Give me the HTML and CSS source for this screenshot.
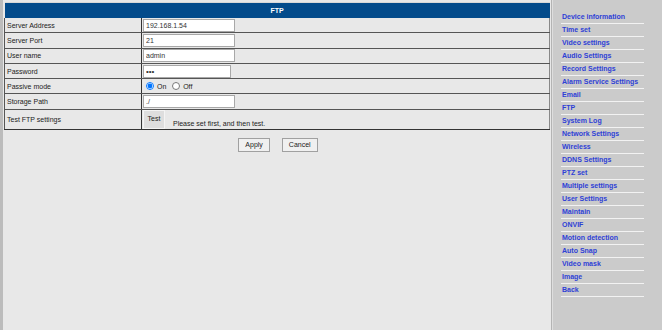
FILE: index.html
```html
<!DOCTYPE html>
<html lang="en">
<head>
    <meta charset="UTF-8">
    <title>FTP</title>
    <link rel="stylesheet" href="styles.css">
</head>
<body>
    <div class="page">
        <div class="main">
            <table class="form-table">
                <tr>
                    <th colspan="2" class="title">FTP</th>
                </tr>
                <tr>
                    <td class="label">Server Address</td>
                    <td><input type="text" class="txt" value="192.168.1.54"></td>
                </tr>
                <tr>
                    <td class="label">Server Port</td>
                    <td><input type="text" class="txt" value="21"></td>
                </tr>
                <tr>
                    <td class="label">User name</td>
                    <td><input type="text" class="txt" value="admin"></td>
                </tr>
                <tr>
                    <td class="label">Password</td>
                    <td><input type="password" class="txt pwd" value="abc"></td>
                </tr>
                <tr>
                    <td class="label">Passive mode</td>
                    <td class="radios">
                        <input type="radio" name="pasv" checked> On
                        <input type="radio" name="pasv"> Off
                    </td>
                </tr>
                <tr>
                    <td class="label">Storage Path</td>
                    <td><input type="text" class="txt" value="./"></td>
                </tr>
                <tr class="test-row">
                    <td class="label">Test FTP settings</td>
                    <td><span class="btn-test">Test</span><span class="hint">Please set first, and then test.</span></td>
                </tr>
            </table>
            <div class="actions">
                <span class="btn">Apply</span>
                <span class="btn">Cancel</span>
            </div>
        </div>
        <div class="side">
            <ul class="menu">
                <li><a href="#">Device information</a></li>
                <li><a href="#">Time set</a></li>
                <li><a href="#">Video settings</a></li>
                <li><a href="#">Audio Settings</a></li>
                <li><a href="#">Record Settings</a></li>
                <li><a href="#">Alarm Service Settings</a></li>
                <li><a href="#">Email</a></li>
                <li><a href="#">FTP</a></li>
                <li><a href="#">System Log</a></li>
                <li><a href="#">Network Settings</a></li>
                <li><a href="#">Wireless</a></li>
                <li><a href="#">DDNS Settings</a></li>
                <li><a href="#">PTZ set</a></li>
                <li><a href="#">Multiple settings</a></li>
                <li><a href="#">User Settings</a></li>
                <li><a href="#">Maintain</a></li>
                <li><a href="#">ONVIF</a></li>
                <li><a href="#">Motion detection</a></li>
                <li><a href="#">Auto Snap</a></li>
                <li><a href="#">Video mask</a></li>
                <li><a href="#">Image</a></li>
                <li><a href="#">Back</a></li>
            </ul>
        </div>
    </div>
</body>
</html>
```

FILE: styles.css
```css
html, body {
    margin: 0;
    padding: 0;
    height: 100%;
}
body {
    font-family: "Liberation Sans", Arial, sans-serif;
    font-size: 7px;
    color: #222;
    background: #e8e8e8;
}
.page {
    display: flex;
    height: 330px;
    border-left: 3px solid #bcbcbc;
}
.main {
    width: 548px;
    background: #e8e8e8;
    padding-top: 2px;
}
.form-table {
    width: 546px;
    margin-left: 1px;
    border-collapse: collapse;
    border-top: 1px solid #d8d8d8;
}
.form-table .title {
    background: #034b8b;
    color: #fff;
    font-weight: bold;
    font-size: 7px;
    height: 15px;
    padding: 0;
    text-align: center;
}
.form-table td {
    height: 14.3px;
    padding: 0;
    border-bottom: 1px solid #555;
    vertical-align: middle;
}
.form-table .label {
    width: 134px;
    padding-left: 2px;
    border-left: 1px solid #555;
    border-right: 1px solid #333;
}
.form-table td:last-child {
    border-right: 1px solid #888;
}
.txt {
    box-sizing: border-box;
    width: 92px;
    height: 13px;
    margin: 0 0 0 1px;
    padding: 0 2px;
    border: 1px solid #a8a8a8;
    background: #fff;
    font-family: "Liberation Sans", Arial, sans-serif;
    font-size: 7px;
    color: #333;
    display: block;
}
.pwd {
    width: 88px;
    font-size: 8px;
}
.radios {
    font-size: 7px;
}
.radios input {
    width: 8px;
    height: 8px;
    margin: 0 1px 0 4px;
    vertical-align: -1px;
}
.test-row td {
    height: 19px;
    border-bottom: 1px solid #333;
}
.btn-test {
    display: inline-block;
    box-sizing: border-box;
    width: 22px;
    height: 19px;
    line-height: 15px;
    margin-left: 1px;
    background: #dedede;
    border: 1px solid #f4f4f4;
    text-align: center;
    vertical-align: top;
}
.hint {
    display: inline-block;
    margin-left: 8px;
    margin-top: 10px;
    vertical-align: top;
}
.actions {
    display: flex;
    justify-content: center;
    gap: 12px;
    margin-top: 8px;
    padding-left: 2px;
}
.btn {
    display: inline-block;
    box-sizing: border-box;
    height: 14px;
    line-height: 12px;
    padding: 0 6px;
    border: 1px solid #a0a0a0;
    background: #f0f0f0;
    font-size: 7px;
    color: #222;
}
.side {
    flex: 1;
    background: #cbcbcb;
    border-left: 1px solid #b4b4b4;
    box-shadow: inset 1px 0 0 #dedede;
}
.menu {
    list-style: none;
    margin: 11px 0 0 9px;
    padding: 0;
    width: 83px;
}
.menu li {
    height: 12px;
    line-height: 11px;
    border-bottom: 1px solid #f2f2f2;
}
.menu a {
    color: #2e3fd6;
    font-weight: bold;
    font-size: 7px;
    text-decoration: none;
    padding-left: 1px;
}
```
